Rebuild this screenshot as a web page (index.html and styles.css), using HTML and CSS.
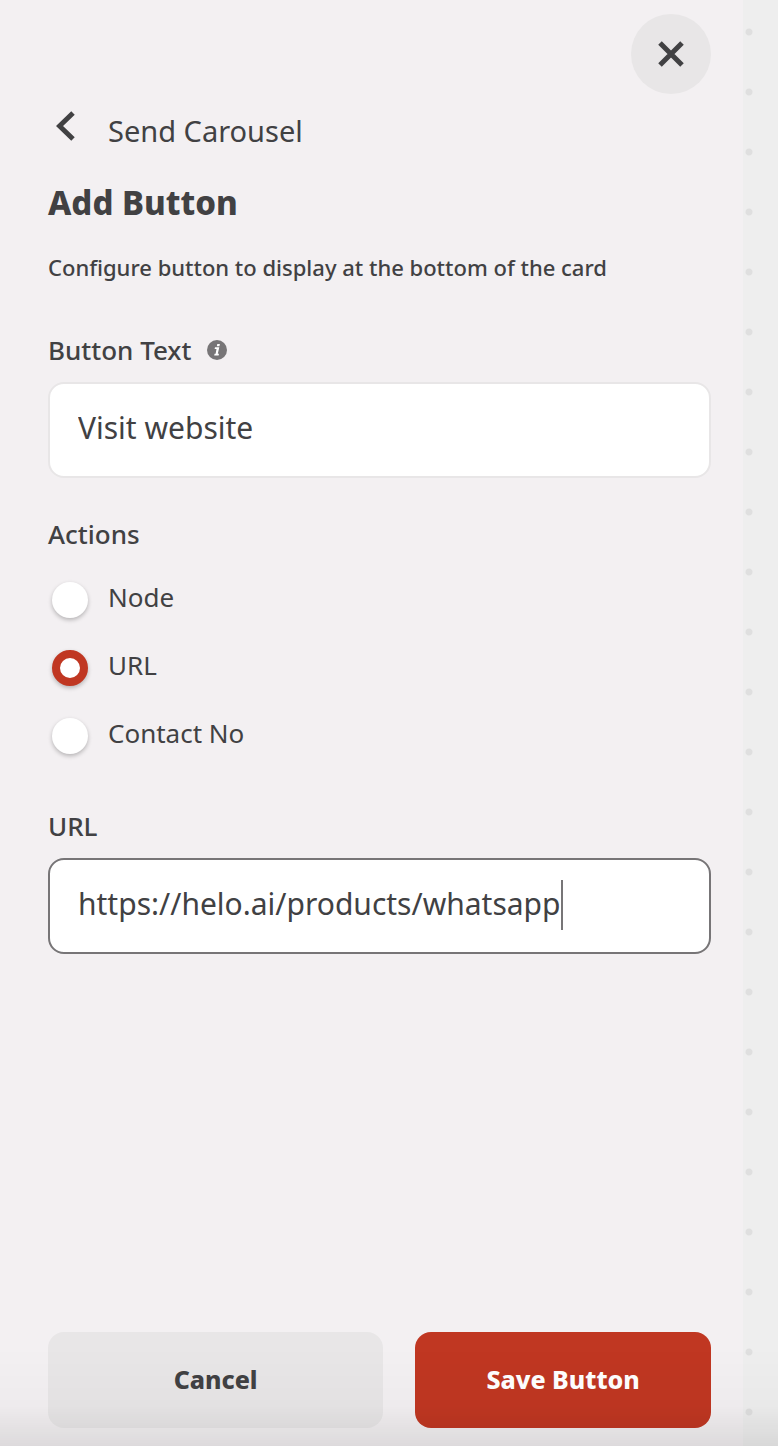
FILE: index.html
```html
<!DOCTYPE html>
<html lang="en">
<head>
  <meta charset="UTF-8">
  <meta name="viewport" content="width=device-width, initial-scale=1.0">
  <title>Add Button</title>
  <link rel="stylesheet" href="styles.css">
</head>
<body>
  <main class="panel">
    <button type="button" class="btn-close" aria-label="Close">
      <svg width="28" height="28" viewBox="0 0 28 28"><path d="M3 3L25 25M25 3L3 25"/></svg>
    </button>

    <a href="#" class="back-link">
      <svg width="20" height="30" viewBox="0 0 20 30"><path d="M17 2L3.5 15L17 28"/></svg>
      <span>Send Carousel</span>
    </a>

    <h1>Add Button</h1>
    <p class="description">Configure button to display at the bottom of the card</p>

    <form class="button-form">
      <div class="form-group">
        <label for="buttonText">Button Text
          <svg class="info-icon" width="20" height="20" viewBox="0 0 20 20">
            <circle cx="10" cy="10" r="10"/>
            <path d="M10.3 3.9h2.6l-.5 2.4H9.8zM8 7.3h4.3l-1.5 6.4h1.2l-.4 1.8H7.2l.4-1.8h1L9.5 9H7.6z"/>
          </svg>
        </label>
        <div class="field">
          <input type="text" id="buttonText" value="Visit website">
        </div>
      </div>

      <fieldset class="actions">
        <legend>Actions</legend>
        <label class="option"><input type="radio" name="action" value="node"><span>Node</span></label>
        <label class="option"><input type="radio" name="action" value="url" checked><span>URL</span></label>
        <label class="option"><input type="radio" name="action" value="contact"><span>Contact No</span></label>
      </fieldset>

      <div class="form-group">
        <label for="url">URL</label>
        <div class="field active">
          <input type="text" id="url" value="https://helo.ai/products/whatsapp">
          <span class="caret"></span>
        </div>
      </div>

      <div class="form-buttons">
        <button type="button" class="btn btn-cancel">Cancel</button>
        <button type="submit" class="btn btn-save">Save Button</button>
      </div>
    </form>
  </main>
  <aside class="canvas"></aside>
  <div class="bottom-shade"></div>
</body>
</html>
```
FILE: styles.css
```css
* {
  box-sizing: border-box;
}

body {
  margin: 0;
  display: flex;
  min-height: 100vh;
  background-color: #f3f0f2;
  color: #414143;
  font-family: "Noto Sans", sans-serif;
  font-size: 26px;
  line-height: 32px;
}

input,
button {
  font-family: inherit;
  color: inherit;
}

button {
  border: none;
  cursor: pointer;
}

.panel {
  flex: 1;
  display: flex;
  flex-direction: column;
  padding: 14px 32px 18px 48px;
}

/* dotted flow canvas behind the panel */
.canvas {
  width: 35px;
  background-color: #eeeeee;
  background-image: radial-gradient(circle, #dfdfdf 0, #dfdfdf 3px, transparent 4px);
  background-size: 60px 60px;
  background-position: -24px 2px;
}

.btn-close {
  display: flex;
  align-items: center;
  justify-content: center;
  align-self: flex-end;
  width: 80px;
  height: 80px;
  padding: 0;
  border-radius: 50%;
  background-color: #e8e6e7;
}

.btn-close path,
.back-link path {
  fill: none;
  stroke: #414143;
  stroke-width: 4;
}

.btn-close path {
  stroke-width: 5;
}

.back-link {
  display: flex;
  align-items: flex-start;
  gap: 32px;
  margin-top: 17px;
  padding-left: 8px;
  color: inherit;
  font-size: 29px;
  line-height: 40px;
  text-decoration: none;
}

.back-link path {
  stroke-width: 5;
}

h1 {
  margin: 32px 0 28px;
  font-size: 33px;
  font-weight: 800;
  line-height: 40px;
}

.description {
  margin: 0 0 51px;
  font-size: 22px;
  font-weight: 500;
}

.button-form {
  flex: 1;
  display: flex;
  flex-direction: column;
}

.form-group {
  display: flex;
  flex-direction: column;
  gap: 16px;
}

.form-group > label,
legend {
  font-weight: 500;
}

.form-group > label {
  display: flex;
  align-items: center;
  gap: 16px;
}

.info-icon circle {
  fill: #777577;
}

.info-icon path {
  fill: #ffffff;
}

.field {
  display: flex;
  align-items: center;
  height: 96px;
  padding: 0 28px 6px;
  border: 2px solid #e8e6e7;
  border-radius: 16px;
  background-color: #ffffff;
}

.field.active {
  border-color: #777577;
}

.field input {
  field-sizing: content;
  max-width: 100%;
  height: 50px;
  padding: 0;
  border: none;
  outline: none;
  background: none;
  font-size: 30px;
}

/* sits slightly lower than the text */
.caret {
  width: 2px;
  height: 50px;
  margin-top: 4px;
  background-color: #777577;
}

.actions {
  display: flex;
  flex-direction: column;
  gap: 32px;
  margin: 40px 0 56px;
  padding: 0;
  border: none;
}

legend {
  margin-bottom: 32px;
  padding: 0;
}

.option {
  display: flex;
  align-items: center;
  gap: 20px;
  height: 36px;
  padding-left: 4px;
}

.option span {
  padding-bottom: 6px;
}

.option input {
  appearance: none;
  width: 36px;
  height: 36px;
  margin: 0;
  border-radius: 50%;
  background-color: #ffffff;
  box-shadow: 0 2px 4px rgba(0, 0, 0, 0.25);
}

.option input:checked {
  border: 8px solid #c03722;
}

.form-buttons {
  display: grid;
  grid-template-columns: 17fr 15fr;
  gap: 32px;
  margin-top: auto;
}

.btn {
  height: 96px;
  padding: 0 0 2px;
  border-radius: 16px;
  font-size: 25px;
  font-weight: 800;
}

.btn-cancel {
  background-color: #e8e6e7;
}

.btn-save {
  background-color: #c03722;
  color: #ffffff;
}

.bottom-shade {
  position: fixed;
  left: 0;
  right: 0;
  bottom: 0;
  height: 100px;
  background: linear-gradient(transparent, rgba(0, 0, 0, 0.02) 60%, rgba(0, 0, 0, 0.09));
  pointer-events: none;
}
```
